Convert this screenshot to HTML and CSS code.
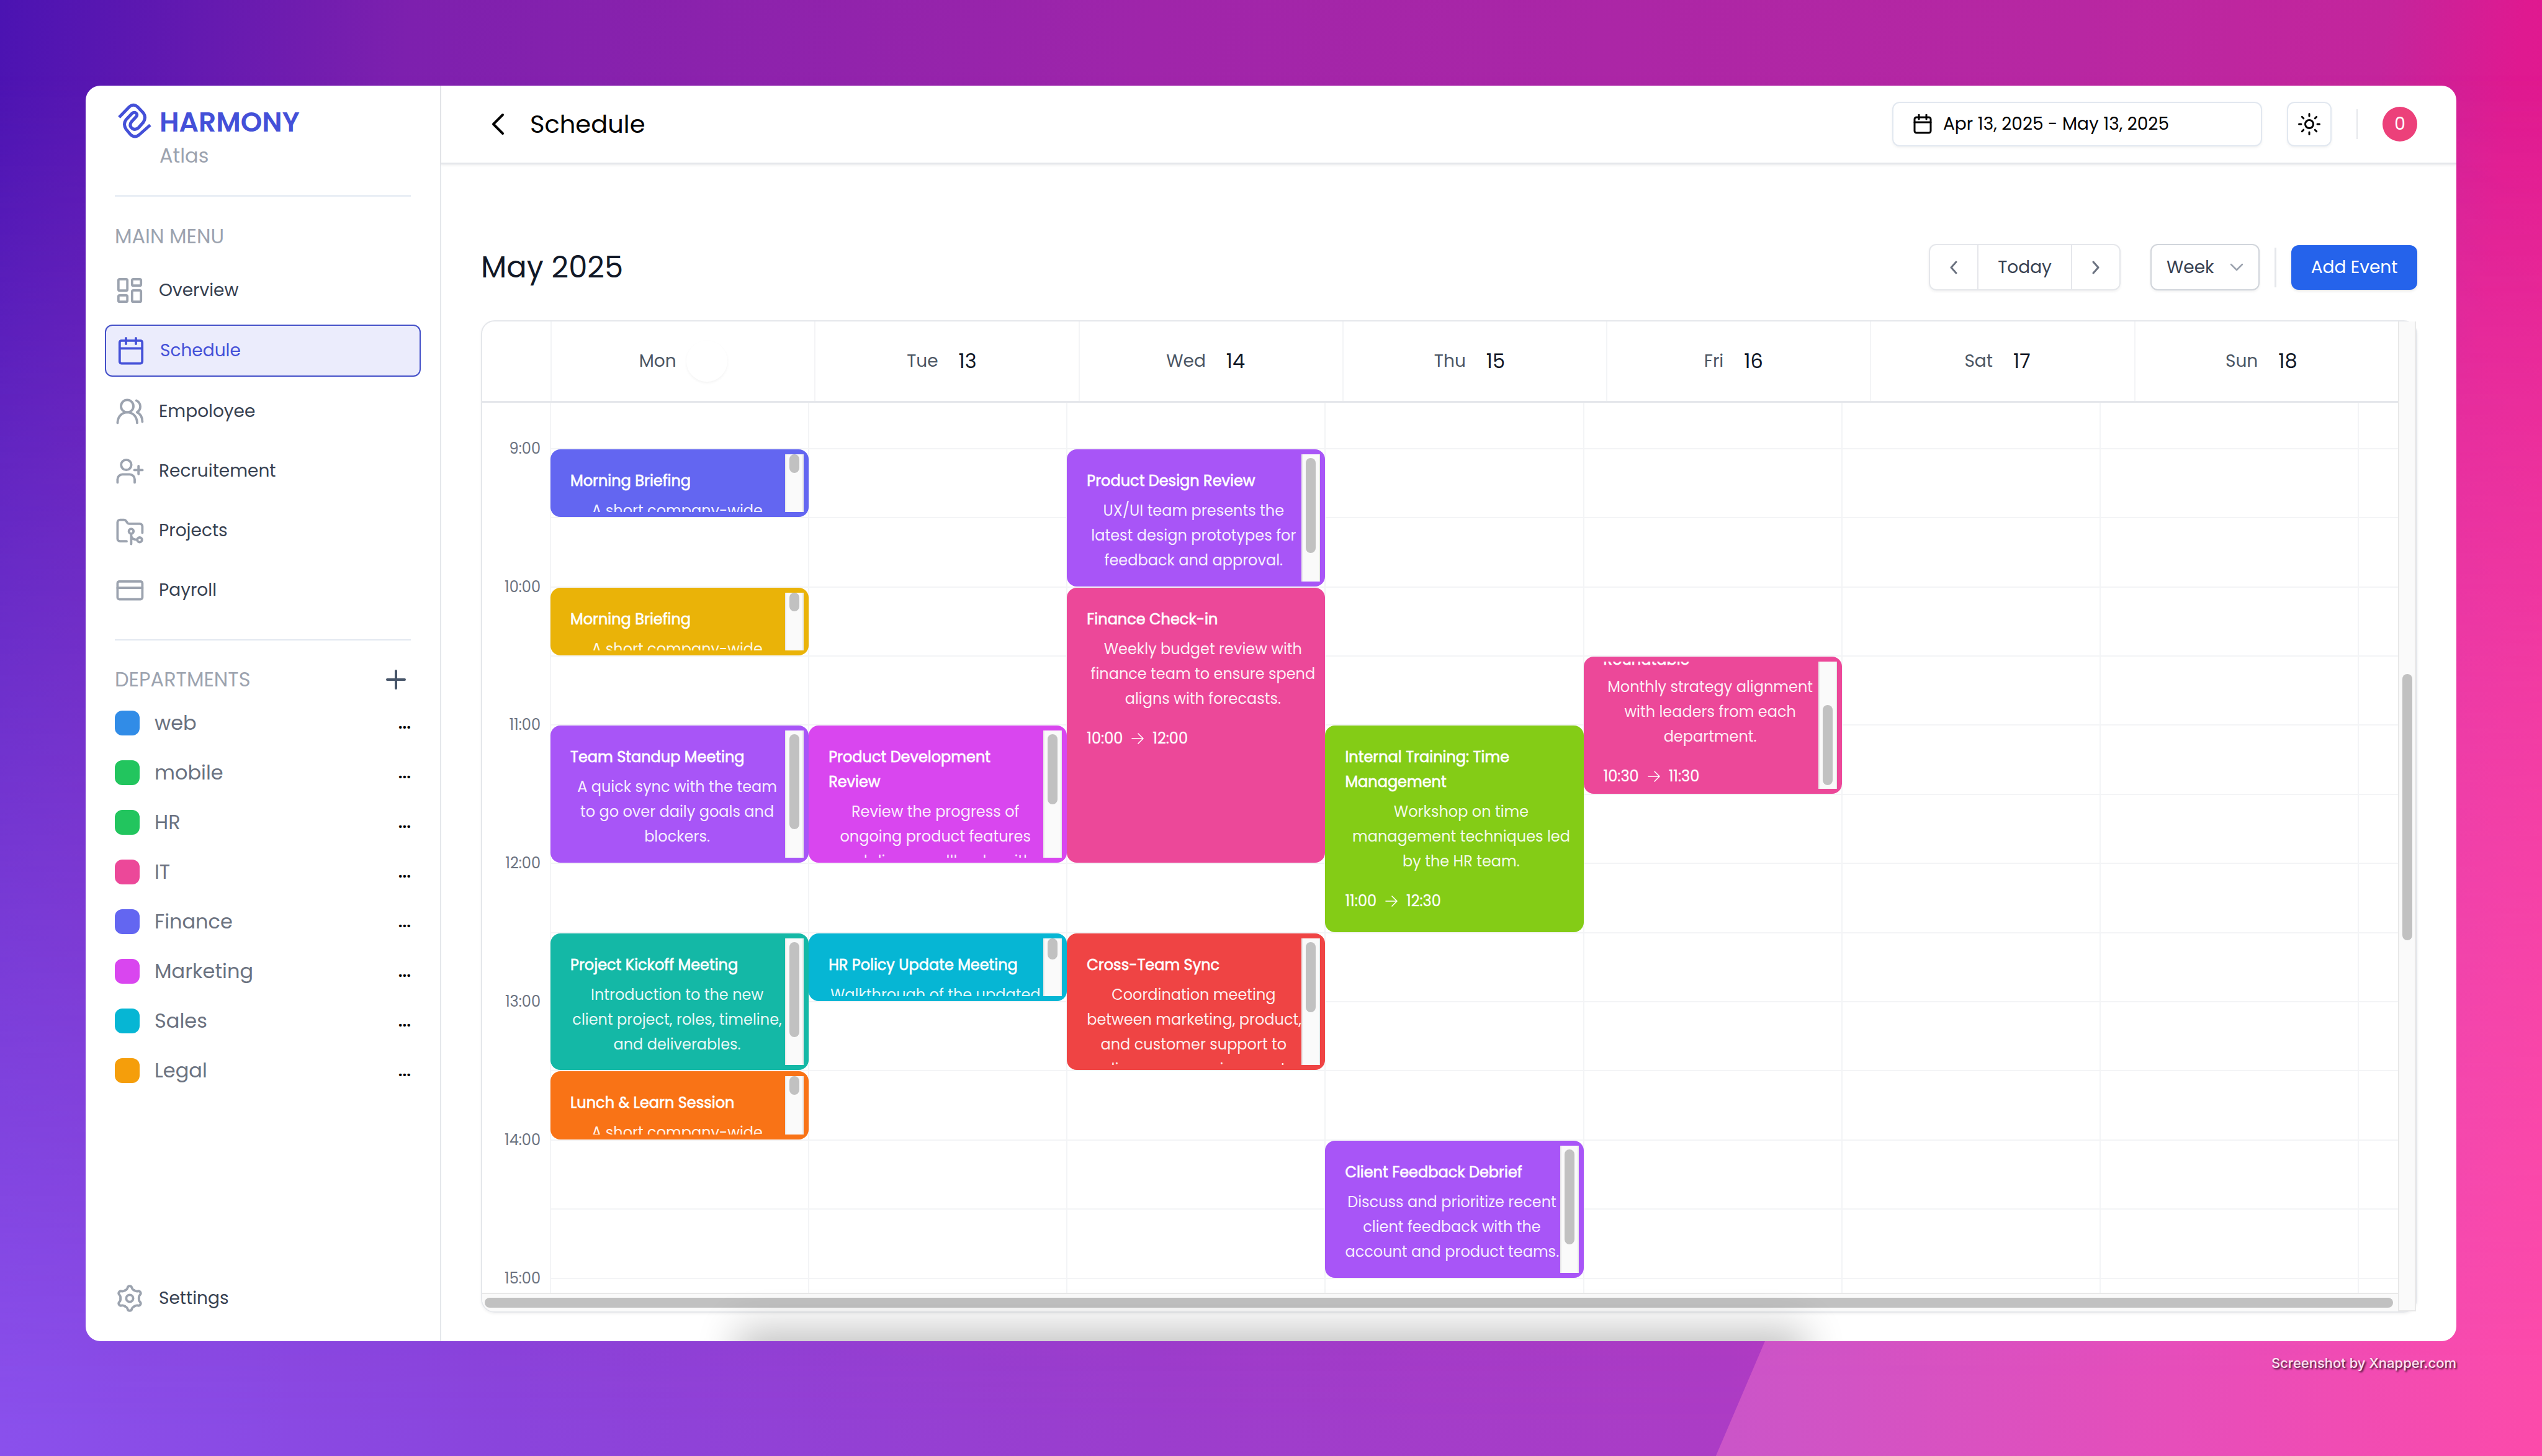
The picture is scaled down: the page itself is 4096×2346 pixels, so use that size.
FILE: index.html
```html
<!DOCTYPE html>
<html lang="en">
<head>
<meta charset="utf-8">
<title>Harmony Atlas – Schedule</title>
<link rel="stylesheet" href="styles.css">
</head>
<body>
<div class="page">
  <div class="window">
    <aside class="sidebar">
      <div class="brand">
        <svg class="brand-logo" viewBox="0 0 54 58" aria-hidden="true"><path d="M2 23L18 6.5Q25 0 32 6.5L41 16Q46 23 41 31L33 40Q27.500 44.500 22.500 40.500Q17.500 36 22 30L29 22.500Q32.500 18.500 29 16Q26 14 22.500 17L13 27Q8 34 13 42L20 50.500Q27.500 57.500 35 50.500L52 35.500"/></svg>
        <div class="brand-text"><strong class="brand-name">HARMONY</strong><span class="brand-sub">Atlas</span></div>
      </div>
      <h2 class="side-title side-title-main">MAIN MENU</h2>
      <nav class="menu">
        <a class="menu-item" href="#"><svg class="icon" viewBox="0 0 24 24"><rect x="2.900" y="2.900" width="7.200" height="9.200" rx="1"/><rect x="13.900" y="2.900" width="7.200" height="5.200" rx="1"/><rect x="2.900" y="15.900" width="7.200" height="5.200" rx="1"/><rect x="13.900" y="11.900" width="7.200" height="9.200" rx="1"/></svg>Overview</a>
        <a class="menu-item active" href="#"><svg class="icon" viewBox="0 0 24 24"><rect x="2.900" y="3.900" width="18.200" height="18.400" rx="1.500"/><path d="M3 10.200H21M8 2V6.500M16 2V6.500"/></svg>Schedule</a>
        <a class="menu-item" href="#"><svg class="icon" viewBox="0 0 24 24"><ellipse cx="10" cy="7.700" rx="5" ry="5"/><path d="M2.200 21.200C2.500 9.800 17.700 9.800 18 21.200M17.400 3.200C21.500 5.300 21.500 10.500 17.900 12.600C20.700 13.900 22.200 16.700 22.200 20.300"/></svg>Empoloyee</a>
        <a class="menu-item" href="#"><svg class="icon" viewBox="0 0 24 24"><circle cx="9.200" cy="7" r="4.100"/><path d="M2.200 21.200V18.600A4 4 0 0 1 6.200 14.700H12A4 4 0 0 1 16 18.600V21.200M15.800 11.200H22.300M19.100 8V14.400"/></svg>Recruitement</a>
        <a class="menu-item" href="#"><svg class="icon" viewBox="0 0 24 24"><path d="M9.500 20.600H4.200A2 2 0 0 1 2.200 18.600V5.300A2 2 0 0 1 4.200 3.300H7.500Q8.500 3.300 9.300 4.500L10.200 5.800Q10.700 6.400 11.500 6.400H20A2.200 2.200 0 0 1 22.200 8.600V13.700M13.200 14.600V22.800M13.200 16.500Q14 19.300 18 19.300"/><circle cx="13.200" cy="12.500" r="1.900"/><circle cx="20" cy="19.400" r="1.900"/></svg>Projects</a>
        <a class="menu-item" href="#"><svg class="icon" viewBox="0 0 24 24"><rect x="2.200" y="4.900" width="20" height="14.400" rx="1.500"/><path d="M2.200 10.100H22.200"/></svg>Payroll</a>
      </nav>
      <div class="dept-head">
        <h2 class="side-title">DEPARTMENTS</h2>
        <button class="plain-btn" aria-label="Add department"><svg class="plus" viewBox="0 0 32 32"><path d="M16 2V30M2 16H30"/></svg></button>
      </div>
      <ul class="depts">
        <li class="dept"><span class="swatch c-web"></span><span class="dept-name">web</span><button class="plain-btn more">...</button></li>
        <li class="dept"><span class="swatch c-green"></span><span class="dept-name">mobile</span><button class="plain-btn more">...</button></li>
        <li class="dept"><span class="swatch c-green"></span><span class="dept-name">HR</span><button class="plain-btn more">...</button></li>
        <li class="dept"><span class="swatch c-pink"></span><span class="dept-name">IT</span><button class="plain-btn more">...</button></li>
        <li class="dept"><span class="swatch c-indigo"></span><span class="dept-name">Finance</span><button class="plain-btn more">...</button></li>
        <li class="dept"><span class="swatch c-fuchsia"></span><span class="dept-name">Marketing</span><button class="plain-btn more">...</button></li>
        <li class="dept"><span class="swatch c-cyan"></span><span class="dept-name">Sales</span><button class="plain-btn more">...</button></li>
        <li class="dept"><span class="swatch c-amber"></span><span class="dept-name">Legal</span><button class="plain-btn more">...</button></li>
      </ul>
      <a class="menu-item settings" href="#"><svg class="icon" viewBox="0 0 24 24"><defs><path id="lobe" d="M8.300 5.600C9.400 5 10 4.600 10.200 3.700C10.600 1.500 13.400 1.500 13.800 3.700C14 4.600 14.600 5 15.700 5.600"/></defs><use href="#lobe"/><use href="#lobe" transform="rotate(60 12 12)"/><use href="#lobe" transform="rotate(120 12 12)"/><use href="#lobe" transform="rotate(180 12 12)"/><use href="#lobe" transform="rotate(240 12 12)"/><use href="#lobe" transform="rotate(300 12 12)"/><circle cx="12" cy="12" r="2.800"/></svg>Settings</a>
    </aside>

    <main class="main">
      <header class="topbar">
        <button class="plain-btn back" aria-label="Back"><svg class="back-icon" viewBox="0 0 24 36"><path d="M20 3L5 18L20 33"/></svg></button>
        <h1 class="topbar-title">Schedule</h1>
        <button class="box-btn date-btn"><svg class="date-icon" viewBox="0 0 30 32"><rect x="2" y="5" width="26" height="25" rx="3"/><path d="M2 13H28M9 1V8M21 1V8"/></svg>Apr 13, 2025 - May 13, 2025</button>
        <button class="box-btn sun-btn" aria-label="Theme"><svg class="sun-icon" viewBox="0 0 36 36"><circle cx="18" cy="18" r="6.500"/><path d="M18 1.500V5M18 31V34.500M1.500 18H5M31 18H34.500M6.300 6.300L8.800 8.800M27.200 27.200L29.700 29.700M6.300 29.700L8.800 27.200M27.200 8.800L29.700 6.300"/></svg></button>
        <span class="top-sep"></span>
        <button class="plain-btn avatar">0</button>
      </header>

      <section class="content">
        <div class="toolbar">
          <h2 class="month">May 2025</h2>
          <div class="nav-group">
            <button class="nav-btn" aria-label="Previous week"><svg class="nav-icon" viewBox="0 0 14 22"><path d="M11 2L3 11L11 20"/></svg></button>
            <button class="nav-btn nav-today">Today</button>
            <button class="nav-btn" aria-label="Next week"><svg class="nav-icon" viewBox="0 0 14 22"><path d="M3 2L11 11L3 20"/></svg></button>
          </div>
          <div class="select-wrap">
            <select class="view-select" aria-label="View"><option>Week</option><option>Day</option><option>Month</option></select>
            <svg class="select-icon" viewBox="0 0 22 14"><path d="M2 2L11 11L20 2"/></svg>
          </div>
          <span class="tool-sep"></span>
          <button class="add-btn">Add Event</button>
        </div>

        <div class="calendar">
          <div class="days">
            <div class="day-corner"></div>
            <div class="day">Mon<span class="num today"></span></div>
            <div class="day">Tue<span class="num">13</span></div>
            <div class="day">Wed<span class="num">14</span></div>
            <div class="day">Thu<span class="num">15</span></div>
            <div class="day">Fri<span class="num">16</span></div>
            <div class="day">Sat<span class="num">17</span></div>
            <div class="day">Sun<span class="num">18</span></div>
          </div>
          <div class="grid">
            <i class="v d1"></i><i class="v d2"></i><i class="v d3"></i><i class="v d4"></i><i class="v d5"></i><i class="v d6"></i><i class="v d7"></i><i class="v d8"></i>
            <i class="h t900"></i><i class="h t930"></i><i class="h t1000"></i><i class="h t1030"></i><i class="h t1100"></i><i class="h t1130"></i><i class="h t1200"></i><i class="h t1230"></i><i class="h t1300"></i><i class="h t1330"></i><i class="h t1400"></i><i class="h t1430"></i><i class="h t1500"></i>
            <time class="hour t900">9:00</time><time class="hour t1000">10:00</time><time class="hour t1100">11:00</time><time class="hour t1200">12:00</time><time class="hour t1300">13:00</time><time class="hour t1400">14:00</time><time class="hour t1500">15:00</time>

            <article class="event d1 t900 c-indigo"><div class="event-body"><h3>Morning Briefing</h3><p>A short company-wide</p></div><div class="bar tight"><span class="thumb" style="height:30px"></span></div></article>
            <article class="event d1 t1000 c-yellow"><div class="event-body"><h3>Morning Briefing</h3><p>A short company-wide</p></div><div class="bar tight"><span class="thumb" style="height:30px"></span></div></article>
            <article class="event d1 t1100 s2 c-purple"><div class="event-body"><h3>Team Standup Meeting</h3><p>A quick sync with the team<br>to go over daily goals and<br>blockers.</p></div><div class="bar"><span class="thumb" style="height:153px"></span></div></article>
            <article class="event d1 t1230 s2 c-teal"><div class="event-body"><h3>Project Kickoff Meeting</h3><p>Introduction to the new<br>client project, roles, timeline,<br>and deliverables.</p></div><div class="bar"><span class="thumb" style="height:153px"></span></div></article>
            <article class="event d1 t1330 c-orange"><div class="event-body"><h3>Lunch &amp; Learn Session</h3><p>A short company-wide</p></div><div class="bar tight"><span class="thumb" style="height:30px"></span></div></article>
            <article class="event d2 t1100 s2 c-fuchsia"><div class="event-body"><h3>Product Development<br>Review</h3><p>Review the progress of<br>ongoing product features<br>and discuss rollbacks with</p></div><div class="bar"><span class="thumb" style="height:113px"></span></div></article>
            <article class="event d2 t1230 c-cyan"><div class="event-body"><h3>HR Policy Update Meeting</h3><p>Walkthrough of the updated</p></div><div class="bar tight"><span class="thumb" style="height:34px"></span></div></article>
            <article class="event d3 t900 s2 c-purple"><div class="event-body"><h3>Product Design Review</h3><p>UX/UI team presents the<br>latest design prototypes for<br>feedback and approval.</p></div><div class="bar"><span class="thumb" style="height:153px"></span></div></article>
            <article class="event d3 t1000 s4 c-pink"><div class="event-body"><h3>Finance Check-in</h3><p>Weekly budget review with<br>finance team to ensure spend<br>aligns with forecasts.</p><div class="span">10:00<svg class="arrow" viewBox="0 0 20 18"><path d="M1 9H19M11 1L19 9L11 17"/></svg>12:00</div></div></article>
            <article class="event d3 t1230 s2 c-red"><div class="event-body"><h3>Cross-Team Sync</h3><p>Coordination meeting<br>between marketing, product,<br>and customer support to<br>align on campaigns next</p></div><div class="bar"><span class="thumb" style="height:113px"></span></div></article>
            <article class="event d4 t1100 s3 c-lime"><div class="event-body"><h3>Internal Training: Time<br>Management</h3><p>Workshop on time<br>management techniques led<br>by the HR team.</p><div class="span">11:00<svg class="arrow" viewBox="0 0 20 18"><path d="M1 9H19M11 1L19 9L11 17"/></svg>12:30</div></div></article>
            <article class="event d4 t1400 s2 c-purple"><div class="event-body"><h3>Client Feedback Debrief</h3><p>Discuss and prioritize recent<br>client feedback with the<br>account and product teams.</p></div><div class="bar"><span class="thumb" style="height:153px"></span></div></article>
            <article class="event d5 t1030 s2 c-pink"><div class="event-body scrolled"><h3>Roundtable</h3><p>Monthly strategy alignment<br>with leaders from each<br>department.</p><div class="span">10:30<svg class="arrow" viewBox="0 0 20 18"><path d="M1 9H19M11 1L19 9L11 17"/></svg>11:30</div></div><div class="bar bar-end"><span class="thumb" style="height:129px"></span></div></article>
          </div>
          <div class="vtrack"><span class="vspace-top"></span><span class="vthumb"></span><span class="vspace-bottom"></span></div>
          <div class="htrack"><span class="hthumb"></span></div>
        </div>
      </section>
    </main>
  </div>
  <footer class="credit">Screenshot by Xnapper.com</footer>
</div>
</body>
</html>
```
FILE: styles.css
```css
* { box-sizing: border-box; }
body { margin: 0; font-family: Poppins, Inter, "Liberation Sans", sans-serif; font-weight: 400; color: #111827; }
h1, h2, h3, p, ul { margin: 0; padding: 0; font-weight: 400; }
button, select { font: inherit; color: inherit; margin: 0; }
a { color: inherit; text-decoration: none; }
svg { fill: none; stroke: currentColor; stroke-linecap: round; stroke-linejoin: round; flex: none; display: block; }

/* Backdrop */
.page {
  position: relative; isolation: isolate; height: 100vh; padding: 138px 138px 0;
  display: flex; flex-direction: column;
  background: linear-gradient(98deg, #4b13b2 0%, #7d20ae 15%, #9f25aa 42%, #b827a2 76%, #c4259c 87%, #df1990 92%, #e8178b 100%);
}
.page::before, .page::after { content: ""; position: absolute; inset: 0; z-index: -1; }
.page::before {
  background: linear-gradient(to right, #8a50ec 0%, #8a44dc 20%, #9b3dcd 45%, #ac3cc5 68%, #d83fb5 90%, #f047ae 100%);
  mask-image: linear-gradient(to bottom, transparent 5%, #000 98%);
}
.page::after {
  background: linear-gradient(to right, #cb55c8 68%, #ea4db8 88%, #fc4aaa 100%);
  clip-path: polygon(92% 0, 100% 0, 100% 100%, 67.5% 100%);
  mask-image: linear-gradient(to bottom, transparent 5%, #000 95%);
}

.window {
  position: relative; flex: 1; min-height: 0; display: flex; overflow: hidden;
  background: #fff; border-radius: 24px;
}
.window::after {
  content: ""; position: absolute; left: 28%; right: 28%; top: 100%; height: 60px;
  box-shadow: 0 0 64px 20px rgba(0, 0, 0, .24);
}
.credit {
  height: 185px; padding-top: 20px; text-align: right; line-height: 30px;
  font-family: Inter, sans-serif; font-size: 22px; font-weight: 500; color: #ffe3f3;
  text-shadow: 2px 2px 3px rgba(0, 0, 0, .8);
}

/* Sidebar */
.sidebar {
  width: 573px; flex: none; padding: 24px 31px 29px; border-right: 2px solid #e5e7eb;
  display: flex; flex-direction: column;
}
.brand { display: flex; gap: 13px; height: 155px; margin: 0 16px; padding: 4px 0 0 5px; border-bottom: 3px solid #e8eef5; }
.brand-logo { width: 54px; height: 58px; stroke: #4450d8; stroke-width: 5; stroke-linecap: butt; }
.brand-text { display: flex; flex-direction: column; }
.brand-name { font-size: 44px; line-height: 62px; font-weight: 600; color: #4450d8; }
.brand-sub { font-size: 32px; line-height: 46px; color: #9ca3af; }
.side-title { font-size: 32px; line-height: 40px; color: #9ca3af; }
.side-title-main { margin: 44px 16px 26px; }
.menu { display: flex; flex-direction: column; gap: 15px; padding-bottom: 39px; }
.menu-item {
  height: 81px; padding: 0 16px; border-radius: 12px; display: flex; align-items: center; gap: 23px;
  font-size: 28px; color: #374151;
}
.icon { width: 48px; height: 48px; stroke: #9ca3af; stroke-width: 1.9; }
.menu-item.active { height: 84px; background: #ebecfc; border: 2px solid #4450c8; color: #4450d8; }
.active .icon { stroke: #4450d8; }
.settings { margin-top: auto; }
.dept-head {
  margin: 0 16px; padding: 43px 8px 0 0; border-top: 2px solid #e2e8f0;
  display: flex; justify-content: space-between; align-items: center;
}
.plain-btn { background: none; border: 0; padding: 0; cursor: pointer; }
.plus { width: 32px; height: 32px; stroke: #475569; stroke-width: 4; }
.depts { list-style: none; margin: 10px 16px 0; }
.dept { height: 80px; display: flex; align-items: center; gap: 24px; font-size: 32px; color: #6b7280; }
.swatch { width: 40px; height: 40px; border-radius: 12px; }
.dept-name { flex: 1; }
.more { font-size: 26px; font-weight: 600; color: #000; }

/* Top bar */
.main { flex: 1; min-width: 0; display: flex; flex-direction: column; }
.topbar {
  height: 127px; padding: 0 63px 0 79px; display: flex; align-items: center;
  border-bottom: 3px solid #e5e7eb; box-shadow: 0 2px 4px rgba(0, 0, 0, .05);
}
.back-icon { width: 24px; height: 36px; stroke: #000; stroke-width: 4; }
.topbar-title { flex: 1; margin-left: 40px; font-size: 40px; color: #000; }
.box-btn {
  height: 72px; background: #fff; border: 2px solid #e2e8f0; border-radius: 12px; color: #000;
  display: flex; align-items: center; box-shadow: 0 2px 4px rgba(0, 0, 0, .05);
}
.date-btn { width: 596px; padding: 0 32px; gap: 18px; font-size: 28px; }
.date-icon { width: 30px; height: 32px; stroke-width: 3; }
.sun-btn { width: 72px; justify-content: center; margin: 0 40px; padding: 0; }
.sun-icon { width: 36px; height: 36px; stroke-width: 3; }
.top-sep { width: 2px; height: 48px; background: #e5e7eb; margin-right: 40px; }
.avatar { width: 56px; height: 56px; border-radius: 50%; background: #ec407a; color: #fff; font-size: 28px; }

/* Toolbar */
.content { flex: 1; min-height: 0; padding: 128px 63px 46px 64px; display: flex; flex-direction: column; gap: 48px; }
.toolbar { height: 75px; display: flex; align-items: center; font-size: 28px; color: #374151; }
.month { flex: 1; font-size: 48px; color: #111827; }
.nav-group {
  height: 75px; display: flex; border: 2px solid #e5e7eb; border-radius: 12px;
  box-shadow: 0 2px 4px rgba(0, 0, 0, .06);
}
.nav-btn { width: 76px; padding: 0; background: none; border: 0; display: flex; align-items: center; justify-content: center; }
.nav-today { width: 153px; border-left: 2px solid #e5e7eb; border-right: 2px solid #e5e7eb; }
.nav-icon { width: 14px; height: 22px; stroke: #6b7280; stroke-width: 3; }
.select-wrap { position: relative; margin: 0 24px 0 48px; }
.view-select {
  appearance: none; width: 176px; height: 75px; padding: 0 24px; background: #fff;
  border: 2px solid #d1d5db; border-radius: 12px; box-shadow: 0 2px 4px rgba(0, 0, 0, .06);
}
.select-icon { position: absolute; right: 26px; top: 31px; width: 22px; height: 14px; stroke: #9ca3af; stroke-width: 2.500; pointer-events: none; }
.tool-sep { width: 3px; height: 64px; background: #e5e7eb; margin-right: 24px; }
.add-btn { width: 203px; height: 72px; padding: 0; border: 0; border-radius: 12px; background: #2563eb; color: #fff; box-shadow: 0 2px 4px rgba(0, 0, 0, .1); }

/* Calendar */
.calendar {
  flex: 1; min-height: 0; display: grid;
  grid-template: 131px minmax(0, 1fr) 30px / minmax(0, 1fr) 29px;
  border: 2px solid #e5e7eb; border-radius: 22px; box-shadow: 0 2px 4px rgba(0, 0, 0, .06);
}
.days {
  display: grid; grid-template-columns: 110px repeat(7, minmax(0, 1fr));
  border-bottom: 3px solid #e5e7eb;
}
.day {
  border-left: 2px solid #f3f4f6; display: flex; align-items: center; justify-content: center;
  font-size: 28px; color: #4b5563;
}
.num { margin-left: 16px; padding: 0 17px; font-size: 32px; color: #111827; }
.today { width: 66px; height: 66px; border-radius: 50%; box-shadow: 0 2px 4px rgba(0, 0, 0, .05); }
.grid {
  min-height: 0; overflow: hidden; display: grid;
  grid-template-columns: 109px repeat(7, minmax(0, 416fr)) minmax(0, 65fr);
  grid-template-rows: minmax(0, 146fr) repeat(12, minmax(0, 223fr)) minmax(0, 49fr);
}
.v { grid-row: 1 / -1; border-left: 2px solid #f3f4f6; }
.h { grid-column: 2 / -1; border-top: 2px solid #f3f4f6; }
.d1 { grid-column: 2; } .d2 { grid-column: 3; } .d3 { grid-column: 4; } .d4 { grid-column: 5; }
.d5 { grid-column: 6; } .d6 { grid-column: 7; } .d7 { grid-column: 8; } .d8 { grid-column: 9; }
.t900 { grid-row-start: 2; } .t930 { grid-row-start: 3; } .t1000 { grid-row-start: 4; } .t1030 { grid-row-start: 5; }
.t1100 { grid-row-start: 6; } .t1130 { grid-row-start: 7; } .t1200 { grid-row-start: 8; } .t1230 { grid-row-start: 9; }
.t1300 { grid-row-start: 10; } .t1330 { grid-row-start: 11; } .t1400 { grid-row-start: 12; } .t1430 { grid-row-start: 13; }
.t1500 { grid-row-start: 14; }
.s2 { grid-row-end: span 2; } .s3 { grid-row-end: span 3; } .s4 { grid-row-end: span 4; }
.hour { grid-column: 1; height: 28px; margin-top: -13px; padding-right: 15px; text-align: right; font-size: 24px; line-height: 28px; color: #6b7280; }

.event {
  min-height: 0; margin: 2px -1px 0 1px; padding: 8px; border-radius: 16px; overflow: hidden;
  display: flex; color: #fff; font-size: 24px; line-height: 40px;
}
.event-body { flex: 1; min-width: 0; overflow: hidden; padding: 23px 2px 0 24px; }
.event h3 { font-size: 24px; -webkit-text-stroke: 1px rgba(255, 255, 255, .7); }
.event p { margin-top: 8px; text-align: center; white-space: nowrap; color: rgba(255, 255, 255, .92); }
.span { margin-top: 24px; height: 40px; flex: none; display: flex; align-items: center; gap: 14px; -webkit-text-stroke: 1px rgba(255, 255, 255, .3); }
.arrow { width: 20px; height: 18px; stroke-width: 1.600; }
.scrolled { display: flex; flex-direction: column; justify-content: flex-end; }
.scrolled h3 { flex: none; }
.event .scrolled p { margin-top: 4px; }
.bar { width: 30px; flex: none; padding: 6px; background: #fafafa; border: solid #e8e8e8; border-width: 0 2px; display: flex; flex-direction: column; align-items: center; }
.bar.tight { padding: 0; }
.bar-end { justify-content: flex-end; }
.thumb { width: 16px; border-radius: 8px; background: #c1c1c1; }

.vtrack {
  grid-area: 1 / 2 / 4 / 3; background: #fafafa; border: solid #e8e8e8; border-width: 0 2px 2px;
  display: flex; flex-direction: column; align-items: center;
}
.vspace-top { flex: 569; }
.vthumb { flex: 430; width: 16px; border-radius: 8px; background: #c1c1c1; }
.vspace-bottom { flex: 597; }
.htrack { grid-area: 3 / 1; padding: 6px 8px 0 4px; background: #fafafa; border-top: 2px solid #e8e8e8; border-radius: 0 0 0 20px; }
.hthumb { display: block; height: 16px; border-radius: 8px; background: #c1c1c1; }

/* Palette */
.c-web { background: #318ce7; }
.c-green { background: #22c55e; }
.c-pink { background: #ec4899; }
.c-indigo { background: #6366f1; }
.c-fuchsia { background: #d946ef; }
.c-cyan { background: #06b6d4; }
.c-amber { background: #f59e0b; }
.c-yellow { background: #eab308; }
.c-purple { background: #a855f7; }
.c-teal { background: #14b8a6; }
.c-orange { background: #f97316; }
.c-red { background: #ef4444; }
.c-lime { background: #84cc16; }
```
